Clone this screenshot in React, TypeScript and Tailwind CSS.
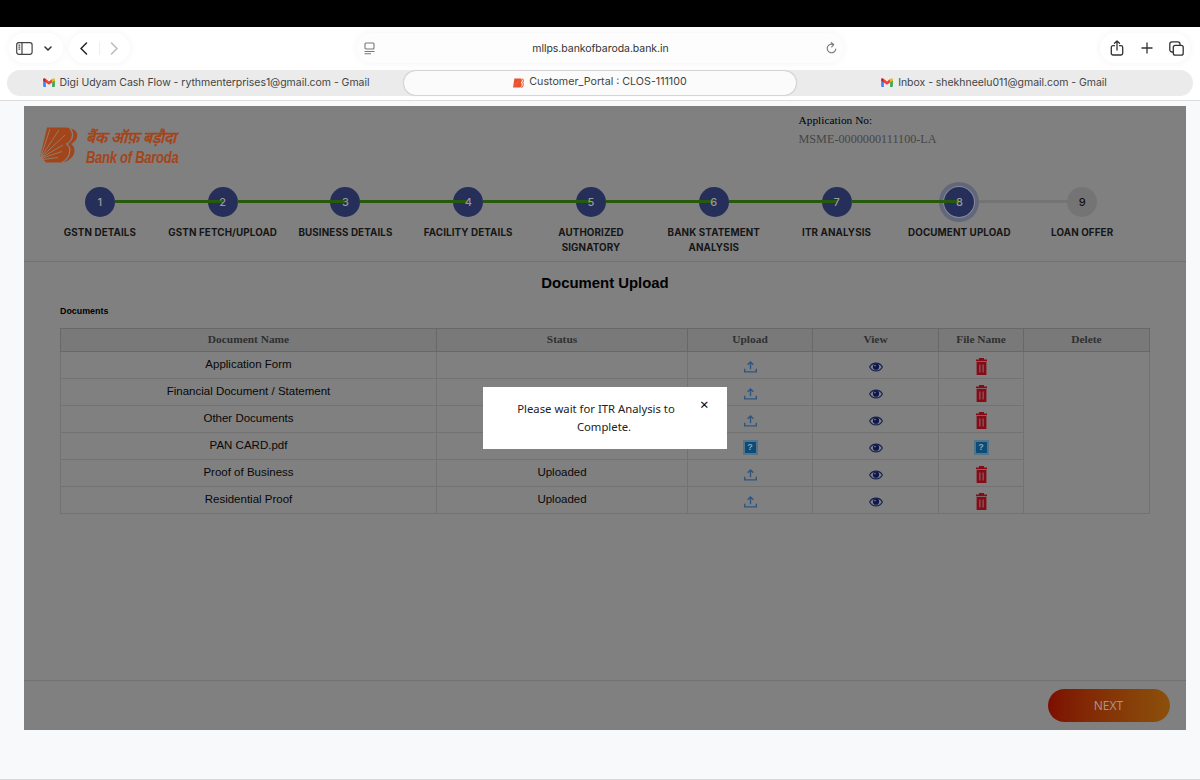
import { ReactNode } from 'react'

const steps = [
  'GSTN DETAILS',
  'GSTN FETCH/UPLOAD',
  'BUSINESS DETAILS',
  'FACILITY DETAILS',
  'AUTHORIZED SIGNATORY',
  'BANK STATEMENT ANALYSIS',
  'ITR ANALYSIS',
  'DOCUMENT UPLOAD',
  'LOAN OFFER',
]
const current = 7

const documents = [
  { name: 'Application Form', status: '' },
  { name: 'Financial Document / Statement', status: '' },
  { name: 'Other Documents', status: '' },
  { name: 'PAN CARD.pdf', status: 'No', missing: true },
  { name: 'Proof of Business', status: 'Uploaded' },
  { name: 'Residential Proof', status: 'Uploaded' },
]

const columns = ['Document Name', 'Status', 'Upload', 'View', 'File Name', 'Delete']

const GmailIcon = () => (
  <svg width="12" height="9" viewBox="0 0 52 40" className="shrink-0">
    <path d="M0 5v31a4 4 0 0 0 4 4h8V18z" fill="#4285f4" />
    <path d="M40 18v22h8a4 4 0 0 0 4-4V5z" fill="#34a853" />
    <path d="M40 5v15l12-9V6c0-5-5-7-9-4z" fill="#fbbc04" />
    <path d="M12 20V4l14 11L40 4v16L26 30z" fill="#ea4335" />
    <path d="M0 6v5l12 9V4L9 2C5-1 0 1 0 6z" fill="#c5221f" />
  </svg>
)

const BankFavicon = () => (
  <svg width="11" height="10" viewBox="0 0 24 20" className="shrink-0">
    <path d="M3 0h13c4 0 5 6 1 9 4 3 2 11-3 11H0z" fill="#e8532f" />
    <path d="M20 1c4 2 3 6 1 8 3 3 1 9-3 11" fill="none" stroke="#ee7245" strokeWidth="2.5" />
    <path d="M2 18L13 5" stroke="#f08a68" strokeWidth="1" />
  </svg>
)

const BankLogo = () => (
  <svg width="39" height="37" viewBox="0 0 39 37" className="shrink-0">
    <path d="M7 .5h19c8 0 8 13 0 16.500 7 3 5 17-5 18.500H6L.3 29z" fill="#a3451a" />
    <path d="M31.500 1.800c8.500 2 7 12-.5 15.200 6.500 4 4 15-7 18.200H20C29 32 32 22 27 17c6-4 7-11 2-15.200z" fill="#a3451a" />
    <path d="M30 1.500c4.500 5 3 12-3.500 15.500 6 4 3.500 15-5 18.500" fill="none" stroke="#808080" strokeWidth="1.3" />
    <path
      d="M1 29L10 2M1 30L19 3M1 30.500L25 8M1 31l22-13M1 31.500l21-7M2 32.500l16-2"
      stroke="#94806f"
      strokeWidth=".9"
    />
  </svg>
)

const UploadIcon = () => (
  <svg width="13" height="12" viewBox="0 0 13 12" fill="none" stroke="#2f5680" strokeWidth="1.4">
    <path d="M.7 7.7v3.2h11.6V7.7M6.5 8.2V1M3.6 3.8L6.5 1l2.900 2.800" />
  </svg>
)

const EyeIcon = () => (
  <svg width="14" height="10" viewBox="0 0 14 10">
    <path d="M.6 5C3.400-.2 10.600-.2 13.400 5 10.600 10.200 3.400 10.200 .6 5z" fill="#7c8089" stroke="#15204f" strokeWidth="1.1" />
    <circle cx="7" cy="4.7" r="3.1" fill="#0e1746" />
    <circle cx="6" cy="3.6" r=".8" fill="#7c86a8" />
  </svg>
)

const TrashIcon = () => (
  <svg width="11" height="17" viewBox="0 0 11 17">
    <path d="M3 0h5v1.500h3V3.300H0V1.500h3z" fill="#850b16" />
    <path d="M.6 4h9.800V17H.6z" fill="#850b16" />
    <path d="M3.900 6.500v8M7.100 6.500v8" stroke="#857578" strokeWidth="1" />
  </svg>
)

const MissingImage = () => (
  <span className="flex h-[15px] w-[15px] items-center justify-center bg-[#527488]">
    <span className="flex h-[11px] w-[11px] items-center justify-center bg-[#0d4a75] font-['Liberation_Sans'] text-[9px] font-bold leading-none text-[#8aa5b5]">
      ?
    </span>
  </span>
)

function Toolbar() {
  return (
    <div className="flex h-[42px] items-center pl-[9px] pr-[10px]">
      <div className="flex h-[30px] w-[54px] items-center gap-[11px] rounded-full bg-white pl-[7px] shadow-[0_0_8px_rgba(0,0,0,0.05)]">
        <svg width="17" height="13" viewBox="0 0 17 13" fill="none" stroke="#444" strokeWidth="1.2">
          <rect x=".7" y=".7" width="15.4" height="11.6" rx="2.2" />
          <path d="M6 .7v11.600M2.500 3.200h1.700M2.500 5.200h1.700M2.500 7.200h1.700" />
        </svg>
        <svg width="8" height="5" viewBox="0 0 8 5" fill="none" stroke="#333" strokeWidth="1.5" strokeLinecap="round">
          <path d="M1 1l3 3 3-3" />
        </svg>
      </div>
      <div className="ml-[6px] flex h-[30px] w-[61px] items-center rounded-full bg-white shadow-[0_0_8px_rgba(0,0,0,0.05)]">
        <div className="flex w-[31px] justify-center border-r border-[#eee]">
          <svg width="8" height="13" viewBox="0 0 8 13" fill="none" stroke="#222" strokeWidth="1.5" strokeLinecap="round">
            <path d="M6.500 1l-5.500 5.500 5.500 5.500" />
          </svg>
        </div>
        <div className="flex w-[28px] justify-center">
          <svg width="8" height="13" viewBox="0 0 8 13" fill="none" stroke="#bbb" strokeWidth="1.5" strokeLinecap="round">
            <path d="M1.500 1l5.500 5.500-5.500 5.500" />
          </svg>
        </div>
      </div>
      <div className="ml-[227px] flex h-[30px] w-[486px] items-center rounded-full bg-[#fdfdfd] pl-[7px] pr-[6px] shadow-[0_0_8px_rgba(0,0,0,0.05)]">
        <svg width="11" height="13" viewBox="0 0 11 13" fill="none" stroke="#777" strokeWidth="1.1">
          <rect x="1" y="1" width="9" height="6" rx="1" />
          <path d="M.5 9.500h10M.5 11.800h6.500" />
        </svg>
        <span className="flex-1 pt-px text-center text-[10.5px] tracking-[-0.05px] text-[#333]">mllps.bankofbaroda.bank.in</span>
        <svg width="11" height="12" viewBox="0 0 11 12" fill="none" stroke="#777" strokeWidth="1.1" strokeLinecap="round">
          <path d="M7.500 2.600A4.300 4.300 0 1 0 9.800 7M5.300 .7l2.400 1.900-2 2.300" />
        </svg>
      </div>
      <div className="ml-auto flex h-[30px] w-[90px] items-center justify-between rounded-full bg-white pl-[10px] pr-[6px] shadow-[0_0_8px_rgba(0,0,0,0.05)]">
        <svg width="14" height="16" viewBox="0 0 13 16" fill="none" stroke="#333" strokeWidth="1.3" strokeLinecap="round" strokeLinejoin="round">
          <path d="M4 5.700H2.500A1.700 1.700 0 0 0 .8 7.400v5.900A1.700 1.700 0 0 0 2.500 15h8a1.700 1.700 0 0 0 1.700-1.700V7.400a1.700 1.700 0 0 0-1.700-1.700H9M6.500 10V1M4 3.300L6.500 .9 9 3.300" />
        </svg>
        <svg width="12" height="12" viewBox="0 0 12 12" stroke="#333" strokeWidth="1.3">
          <path d="M6 .5v11M.5 6h11" />
        </svg>
        <svg width="15" height="15" viewBox="0 0 15 15" fill="none" stroke="#333" strokeWidth="1.3">
          <rect x="4.3" y="4.3" width="9.9" height="9.9" rx="2" />
          <path d="M4.300 11H3A2.200 2.200 0 0 1 .8 8.800V3A2.200 2.200 0 0 1 3 .8h5.800A2.200 2.200 0 0 1 11 3v1.300" />
        </svg>
      </div>
    </div>
  )
}

function Tab({ icon, title, active }: { icon: ReactNode; title: string; active?: boolean }) {
  return (
    <div
      className={`flex h-[24px] items-center justify-center gap-[5px] rounded-full text-[#444] ${
        active
          ? 'w-[392px] bg-[#fbfbfb] text-[10.7px] shadow-[0_0_2px_rgba(0,0,0,0.35)]'
          : 'flex-1 text-[10.5px] tracking-[-0.04px]'
      }`}>
      {icon}
      <span className="whitespace-nowrap">{title}</span>
    </div>
  )
}

function Stepper() {
  return (
    <div className="ml-[14.5px] mt-[21px] flex w-[1105px]">
      {steps.map((label, i) => {
        const done = i <= current
        return (
          <div key={label} className="relative flex flex-1 flex-col items-center">
            {i === current && <div className="absolute -top-[5px] h-[40px] w-[40px] rounded-full bg-[#626779]" />}
            <div
              className={`relative flex h-[30px] w-[30px] items-center justify-center rounded-full text-[11px] font-medium ${
                done ? 'bg-[#262f59] text-[#999]' : 'bg-[#747474] text-[#111]'
              } ${i === current ? 'ring-1 ring-[#858b9c]' : ''}`}>
              <span className="relative z-20">{i + 1}</span>
            </div>
            {/* connector runs from the previous circle to the middle of this one */}
            {i > 0 && (
              <div
                className={`absolute right-1/2 top-[13px] h-[3px] ${
                  done ? 'z-10 w-[108px] bg-[#285a0c]' : 'mr-[14px] w-[89px] bg-[#747474]'
                }`}
              />
            )}
            <div className="mt-[8px] max-w-[118px] text-center text-[9.8px] font-bold leading-[15px] tracking-[0.12px] text-[#161616]">
              {label}
            </div>
          </div>
        )
      })}
    </div>
  )
}

function DocumentTable() {
  const cell = 'border border-[#727272] p-0'
  return (
    <table className="ml-[36px] mt-[11px] w-[1090px] table-fixed border-collapse border border-[#606060] text-center">
      <colgroup>
        <col className="w-[376px]" />
        <col className="w-[251px]" />
        <col className="w-[125px]" />
        <col className="w-[126px]" />
        <col className="w-[85px]" />
        <col className="w-[126px]" />
      </colgroup>
      <thead>
        <tr className="h-[23px] bg-[#797979]">
          {columns.map(c => (
            <th key={c} className="border border-[#686868] p-0 font-['Liberation_Serif'] text-[11.4px] leading-none text-[#303030]">
              {c}
            </th>
          ))}
        </tr>
      </thead>
      <tbody className="text-[11.5px] leading-none text-[#080808]">
        {documents.map((doc, i) => (
          <tr key={doc.name} className="h-[27px]">
            <td className={cell}>{doc.name}</td>
            <td className={cell}>{doc.status}</td>
            <td className={cell}>
              <div className="flex justify-center pt-[3px]">{doc.missing ? <MissingImage /> : <UploadIcon />}</div>
            </td>
            <td className={cell}>
              <div className="flex justify-center pt-[3px]"><EyeIcon /></div>
            </td>
            <td className={cell}>
              <div className="flex justify-center pt-[3px]">{doc.missing ? <MissingImage /> : <TrashIcon />}</div>
            </td>
            {i === 0 && <td rowSpan={documents.length} className={cell} />}
          </tr>
        ))}
      </tbody>
    </table>
  )
}

export default function App() {
  return (
    <div className="flex h-[780px] w-[1200px] flex-col overflow-hidden bg-[#f8f9fb] font-['Inter',sans-serif]">
      <div className="h-[27px] shrink-0 bg-black" />
      <header className="h-[74px] shrink-0 border-b border-[#dcdcdc] bg-white">
        <Toolbar />
        <div className="mx-[7px] mt-[0.5px] flex rounded-full bg-[#ebebeb] px-px py-[1px]">
          <Tab icon={<GmailIcon />} title="Digi Udyam Cash Flow - rythmenterprises1@gmail.com - Gmail" />
          <Tab icon={<BankFavicon />} title="Customer_Portal : CLOS-111100" active />
          <Tab icon={<GmailIcon />} title="Inbox - shekhneelu011@gmail.com - Gmail" />
        </div>
      </header>

      <main className="relative ml-[24px] mt-[5px] flex h-[624px] w-[1162px] flex-col bg-[#808080] font-['Liberation_Sans']">
        <section className="h-[156px] shrink-0 border-b border-[#727272] font-['Inter']">
          <div className="flex h-[60px]">
            <div className="flex w-[774.5px] gap-[7px] pl-[16px] pt-[21px]">
              <BankLogo />
              <div className="flex flex-col font-['Open_Sans'] font-bold italic text-[#a3451a]">
                <span className="h-[20px] whitespace-nowrap text-[15.8px] leading-[21px]">बैंक ऑफ़ बड़ौदा</span>
                <span className="w-[94px] origin-left scale-x-[0.81] whitespace-nowrap font-['Liberation_Sans'] text-[16px] leading-[22px] tracking-[-0.3px]">
                  Bank of Baroda
                </span>
              </div>
            </div>
            <div className="pt-[5px] font-['Liberation_Serif'] text-[11.4px] leading-[19px]">
              <div className="text-black">Application No:</div>
              <div className="text-[12.2px] text-[#464646]">MSME-0000000111100-LA</div>
            </div>
          </div>
          <Stepper />
        </section>

        <h1 className="mt-[11px] text-center text-[14.9px] font-bold leading-[20px] text-black">Document Upload</h1>
        <h2 className="ml-[36px] mt-[13px] text-[8.9px] font-bold leading-[11px] text-black">Documents</h2>
        <DocumentTable />

        <footer className="mt-auto flex h-[50px] justify-end border-t border-[#727272] pr-[16.5px] pt-[8px]">
          <button className="h-[33px] w-[122px] rounded-full bg-linear-to-r from-[#7c0d02] to-[#8b500c] font-['Noto_Sans'] text-[12px] text-[#aa9189]">
            NEXT
          </button>
        </footer>

        <div className="absolute left-[459px] top-[281px] z-30 flex h-[61.5px] w-[244px] bg-white font-['Noto_Sans'] text-[#222]">
          <p className="ml-[28px] mt-[13px] w-[170px] text-center text-[11.3px] leading-[17.5px]">
            Please wait for ITR Analysis to <span className="pl-[16px]">Complete.</span>
          </p>
          <span className="ml-[19px] mt-[9px] text-[15px] leading-[16px] text-black">×</span>
        </div>
      </main>

      <div className="mt-auto h-px bg-[#d5d5d5]" />
    </div>
  )
}
